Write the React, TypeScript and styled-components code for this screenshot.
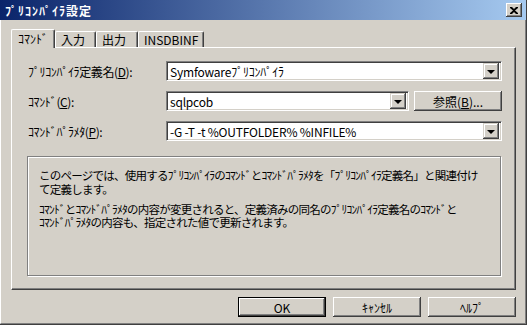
import React from "react";
import styled, { createGlobalStyle } from "styled-components";

const GlobalStyle = createGlobalStyle`
  html, body { margin: 0; padding: 0; background: #d4d0c8; }
  * { box-sizing: border-box; }
  body {
    font-family: "Noto Sans CJK JP", "DejaVu Sans", sans-serif;
    font-size: 12px;
    color: #000;
  }
`;

const Window = styled.div`
  width: 527px;
  height: 325px;
  background: #d4d0c8;
  display: flex;
  flex-direction: column;
  overflow: hidden;
  border-right: 1px solid #404040;
  border-bottom: 1px solid #404040;
`;

const TitleBar = styled.div`
  height: 20px;
  flex: none;
  display: flex;
  align-items: center;
  justify-content: space-between;
  padding: 0 4px 0 5px;
  background: linear-gradient(to right, #0a246a, #a6caf0);
  color: #fff;
  font-weight: bold;
  font-size: 12px;
  letter-spacing: 1px;
`;

const CloseButton = styled.div`
  width: 16px;
  height: 14px;
  background: #d4d0c8;
  box-shadow: inset -1px -1px #404040, inset 1px 1px #fff, inset -2px -2px #808080;
  display: flex;
  align-items: center;
  justify-content: center;
`;

const Body = styled.div`
  flex: 1;
  display: flex;
  flex-direction: column;
  padding: 8px 9px 0 10px;
  border-left: 1px solid #fff;
  border-bottom: 1px solid #808080;
  border-right: 1px solid #808080;
`;

const TabStrip = styled.div`
  display: flex;
  align-items: flex-end;
  height: 19px;
  position: relative;
  z-index: 1;
`;

const Tab = styled.div<{ $active?: boolean; $w: number }>`
  width: ${(p) => p.$w}px;
  height: ${(p) => (p.$active ? 19 : 16)}px;
  margin-bottom: ${(p) => (p.$active ? -1 : 0)}px;
  background: #d4d0c8;
  border-top: 1px solid #fff;
  border-left: 1px solid #fff;
  border-right: 1px solid #404040;
  box-shadow: inset -1px 0 #808080;
  border-top-left-radius: 2px;
  border-top-right-radius: 2px;
  display: flex;
  align-items: center;
  padding-left: ${(p) => (p.$active ? 6 : 5)}px;
  padding-bottom: ${(p) => (p.$active ? 1 : 0)}px;
  white-space: nowrap;
  font-size: 12px;
`;

const Panel = styled.div`
  height: 243px;
  border-top: 1px solid #fff;
  border-left: 1px solid #fff;
  border-right: 1px solid #404040;
  border-bottom: 1px solid #404040;
  box-shadow: inset -1px -1px #808080;
  padding: 13px 15px 0 16px;
`;

const Form = styled.div`
  display: grid;
  grid-template-columns: 138px 1fr;
  row-gap: 10px;
  align-items: center;
`;

const Label = styled.div`
  font-size: 12px;
  white-space: nowrap;
  letter-spacing: -0.4px;
`;

const FieldRow = styled.div`
  display: flex;
  gap: 5px;
`;

const Combo = styled.div<{ $w: number }>`
  width: ${(p) => p.$w}px;
  height: 20px;
  background: #fff;
  border-top: 1px solid #808080;
  border-left: 1px solid #808080;
  border-right: 1px solid #fff;
  border-bottom: 1px solid #fff;
  box-shadow: inset 1px 1px #404040, inset -1px -1px #d4d0c8;
  display: flex;
  align-items: center;
  padding: 2px 2px 2px 3px;
`;

const ComboText = styled.div`
  flex: 1;
  white-space: nowrap;
  overflow: hidden;
  font-size: 12px;
  letter-spacing: -0.2px;
`;

const DropButton = styled.div`
  width: 16px;
  height: 16px;
  flex: none;
  background: #d4d0c8;
  box-shadow: inset -1px -1px #404040, inset 1px 1px #d4d0c8, inset -2px -2px #808080, inset 2px 2px #fff;
  display: flex;
  align-items: center;
  justify-content: center;
`;

const Arrow = styled.div`
  width: 0;
  height: 0;
  border-left: 4px solid transparent;
  border-right: 4px solid transparent;
  border-top: 4px solid #000;
  margin-top: 1px;
`;

const PushButton = styled.div<{ $default?: boolean }>`
  width: 88px;
  height: 20px;
  background: #d4d0c8;
  display: flex;
  align-items: center;
  justify-content: center;
  font-size: 12px;
  white-space: nowrap;
  border: ${(p) => (p.$default ? "1px solid #000" : "none")};
  box-shadow: ${(p) =>
    p.$default
      ? "inset -1px -1px #404040, inset 1px 1px #fff, inset -2px -2px #808080"
      : "inset -1px -1px #404040, inset 1px 1px #fff, inset -2px -2px #808080, inset 2px 2px #d4d0c8"};
`;

const DescBox = styled.div`
  margin-top: 15px;
  height: 120px;
  width: 474px;
  margin-left: -1px;
  border: 1px solid #808080;
  box-shadow: inset 1px 1px #fff, 1px 1px #fff;
  padding: 11px 10px 0 11px;
  font-size: 11.5px;
  letter-spacing: -0.75px;
  white-space: nowrap;
  display: flex;
  flex-direction: column;
  gap: 7px;
`;

const Para = styled.div`
  display: flex;
  flex-direction: column;
`;

const Line = styled.div<{ $h: number }>`
  height: ${(p) => p.$h}px;
  line-height: ${(p) => p.$h}px;
`;

const ButtonRow = styled.div`
  display: flex;
  justify-content: flex-end;
  gap: 7px;
  padding-top: 7px;
`;

function CloseIcon() {
  return (
    <svg width="8" height="7" viewBox="0 0 8 7">
      <path d="M0 0h2l2 2 2-2h2v1L5 3.5 8 6v1H6L4 5 2 7H0V6l3-2.5L0 1z" fill="#000" />
    </svg>
  );
}

function ComboBox({ width, value }: { width: number; value: string }) {
  return (
    <Combo $w={width}>
      <ComboText>{value}</ComboText>
      <DropButton>
        <Arrow />
      </DropButton>
    </Combo>
  );
}

export default function App() {
  return (
    <>
      <GlobalStyle />
      <Window>
        <TitleBar>
          <span>ﾌﾟﾘｺﾝﾊﾟｲﾗ設定</span>
          <CloseButton>
            <CloseIcon />
          </CloseButton>
        </TitleBar>
        <Body>
          <TabStrip>
            <Tab $active $w={44}>ｺﾏﾝﾄﾞ</Tab>
            <Tab $w={41}>入力</Tab>
            <Tab $w={42}>出力</Tab>
            <Tab $w={66}>INSDBINF</Tab>
          </TabStrip>
          <Panel>
            <Form>
              <Label>
                ﾌﾟﾘｺﾝﾊﾟｲﾗ定義名(<u>D</u>):
              </Label>
              <ComboBox width={336} value="Symfowareﾌﾟﾘｺﾝﾊﾟｲﾗ" />
              <Label>
                ｺﾏﾝﾄﾞ(<u>C</u>):
              </Label>
              <FieldRow>
                <ComboBox width={243} value="sqlpcob" />
                <PushButton>
                  参照(<u>B</u>)...
                </PushButton>
              </FieldRow>
              <Label>
                ｺﾏﾝﾄﾞﾊﾟﾗﾒﾀ(<u>P</u>):
              </Label>
              <ComboBox width={336} value="-G -T -t %OUTFOLDER% %INFILE%" />
            </Form>
            <DescBox>
              <Para>
                <Line $h={14}>
                  このページでは、使用するﾌﾟﾘｺﾝﾊﾟｲﾗのｺﾏﾝﾄﾞとｺﾏﾝﾄﾞﾊﾟﾗﾒﾀを「ﾌﾟﾘｺﾝﾊﾟｲﾗ定義名」と関連付け
                </Line>
                <Line $h={14}>て定義します。</Line>
              </Para>
              <Para>
                <Line $h={13}>
                  ｺﾏﾝﾄﾞとｺﾏﾝﾄﾞﾊﾟﾗﾒﾀの内容が変更されると、定義済みの同名のﾌﾟﾘｺﾝﾊﾟｲﾗ定義名のｺﾏﾝﾄﾞと
                </Line>
                <Line $h={13}>ｺﾏﾝﾄﾞﾊﾟﾗﾒﾀの内容も、指定された値で更新されます。</Line>
              </Para>
            </DescBox>
          </Panel>
          <ButtonRow>
            <PushButton $default>OK</PushButton>
            <PushButton>ｷｬﾝｾﾙ</PushButton>
            <PushButton>ﾍﾙﾌﾟ</PushButton>
          </ButtonRow>
        </Body>
      </Window>
    </>
  );
}
